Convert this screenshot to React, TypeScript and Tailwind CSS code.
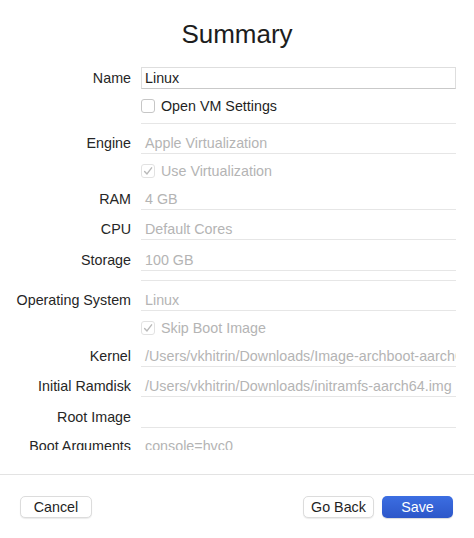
import React from "react";

const F = "font-['Liberation_Sans',Arial,sans-serif]";

function Field({
  label,
  value,
  pt,
  muted = true,
}: {
  label: string;
  value: string;
  pt: string;
  muted?: boolean;
}) {
  return (
    <div className={`grid grid-cols-[131px_315px] gap-x-[10px] ${pt}`}>
      <div className="text-right h-[20px] leading-[20px] text-[#262626] whitespace-nowrap">{label}</div>
      <div
        className={`h-[21px] border-b border-[#e6e6e6] leading-[20px] pl-[4px] pr-[1px] overflow-hidden whitespace-nowrap ${
          muted ? "text-[#b4b4b4]" : "text-[#222]"
        }`}
      >
        {value}
      </div>
    </div>
  );
}

function DisabledCheck({ label, pt }: { label: string; pt: string }) {
  return (
    <div className={`grid grid-cols-[131px_315px] gap-x-[10px] ${pt}`}>
      <div />
      <div className="h-[20px] flex items-center gap-[6px]">
        <div className="w-[14px] h-[14px] rounded-[3px] border border-[#e2e2e2] bg-white flex items-center justify-center">
          <svg width="10" height="10" viewBox="0 0 10 10" fill="none">
            <path d="M1.6 5.4 L4 7.9 L8.6 1.8" stroke="#b9b9b9" strokeWidth="1.4" strokeLinecap="round" strokeLinejoin="round" />
          </svg>
        </div>
        <span className="leading-[20px] text-[#b4b4b4]">{label}</span>
      </div>
    </div>
  );
}

export default function App() {
  return (
    <div className={`w-[474px] h-[538px] bg-white flex flex-col text-[14.3px] ${F}`}>
      <h1 className="pt-[21px] h-[47px] text-[26px] leading-[26px] text-center text-[#1d1d1d]">Summary</h1>
      <div className="h-[403px] overflow-hidden pt-[20px]">
        {/* Name */}
        <div className="grid grid-cols-[131px_315px] gap-x-[10px]">
          <div className="text-right h-[22px] leading-[22px] text-[#262626]">Name</div>
          <div className="h-[22px] border border-[#dedede] border-b-[#c9c9c9] leading-[20px] pl-[3px] text-[#1f1f1f] bg-white">
            Linux
          </div>
        </div>
        {/* Open VM Settings */}
        <div className="grid grid-cols-[131px_315px] gap-x-[10px]">
          <div />
          <div className="h-[35px] pt-[10px] border-b border-[#e6e6e6]">
            <div className="h-[14px] flex items-center gap-[6px]">
              <div className="w-[14px] h-[14px] rounded-[3px] border border-[#c6c6c6] bg-white" />
              <span className="leading-[20px] text-[#1f1f1f]">Open VM Settings</span>
            </div>
          </div>
        </div>
        <Field label="Engine" value="Apple Virtualization" pt="pt-[9px]" />
        <DisabledCheck label="Use Virtualization" pt="pt-[7px]" />
        <Field label="RAM" value="4 GB" pt="pt-[8px]" />
        <Field label="CPU" value="Default Cores" pt="pt-[9px]" />
        <Field label="Storage" value="100 GB" pt="pt-[10px]" />
        <div className="grid grid-cols-[131px_315px] gap-x-[10px]">
          <div />
          <div className="h-[10px] border-b border-[#e6e6e6]" />
        </div>
        <Field label="Operating System" value="Linux" pt="pt-[9px]" />
        <DisabledCheck label="Skip Boot Image" pt="pt-[7px]" />
        <Field label="Kernel" value="/Users/vkhitrin/Downloads/Image-archboot-aarch64" pt="pt-[8px]" />
        <Field label="Initial Ramdisk" value="/Users/vkhitrin/Downloads/initramfs-aarch64.img" pt="pt-[9px]" />
        <Field label="Root Image" value="" pt="pt-[10px]" />
        <Field label="Boot Arguments" value="console=hvc0" pt="pt-[8px]" />
      </div>
      <div className="mt-[24px] border-t border-[#e3e3e3]" />
      <div className="flex items-center pl-[20px] pr-[21px] pt-[21px]">
        <button className="w-[72px] h-[22px] rounded-[5px] bg-white border border-[#dcdcdc] shadow-[0_1px_1px_rgba(0,0,0,0.08)] text-[#1f1f1f] leading-[20px]">
          Cancel
        </button>
        <div className="flex-1" />
        <button className="w-[71px] h-[22px] rounded-[5px] bg-white border border-[#dcdcdc] shadow-[0_1px_1px_rgba(0,0,0,0.08)] text-[#1f1f1f] leading-[20px]">
          Go Back
        </button>
        <button className="ml-[8px] w-[71px] h-[22px] rounded-[5px] bg-linear-to-b from-[#3c6ee2] to-[#2d57c9] shadow-[0_1px_1px_rgba(0,0,0,0.15)] text-white leading-[22px]">
          Save
        </button>
      </div>
    </div>
  );
}
